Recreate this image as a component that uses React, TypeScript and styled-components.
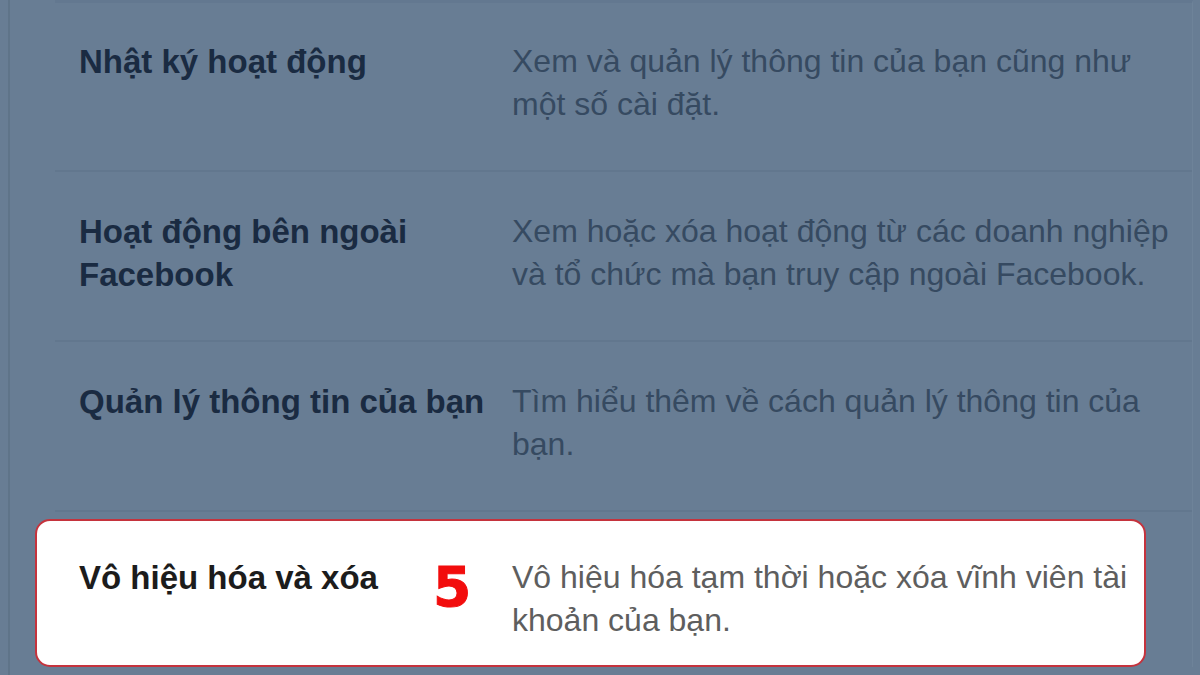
import React from 'react';
import styled, {createGlobalStyle} from 'styled-components';

const GlobalStyle = createGlobalStyle`
  html, body {
    margin: 0;
    padding: 0;
    background: #687d94;
    overflow: hidden;
  }
  * { box-sizing: border-box; }
`;

const Page = styled.div`
  width: 1200px;
  height: 675px;
  background: #687d94;
  padding-left: 8px;
  font-family: 'Liberation Sans', Arial, sans-serif;
`;

const Panel = styled.div`
  height: 100%;
  border-left: 2px solid #5f7489;
  padding-left: 45px;
`;

const List = styled.div`
  border-top: 3px solid #637890;
  border-right: 1px solid #6e8399;
  margin-right: 7px;
`;

const Row = styled.div<{highlight?: boolean}>`
  position: relative;
  display: grid;
  grid-template-columns: 433px 1fr;
  height: ${({highlight}) => (highlight ? '148px' : '170px')};
  padding: ${({highlight}) => (highlight ? '35px 0 0 42px' : '38px 0 0 24px')};
  border-bottom: 2px solid #62778e;
  background: ${({highlight}) => (highlight ? '#ffffff' : 'transparent')};

  &:first-child {
    height: 169px;
    padding-top: 37px;
  }

  ${({highlight}) =>
    highlight &&
    `
    margin: 7px 46px 0 -20px;
    border: 2px solid #c5333d;
    border-radius: 15px;
  `}
`;

const Title = styled.div<{highlight?: boolean}>`
  font-size: 33px;
  line-height: 43px;
  font-weight: 700;
  color: ${({highlight}) => (highlight ? '#1c1c1c' : '#1a2b42')};
`;

const Description = styled.div<{highlight?: boolean}>`
  font-size: 32px;
  line-height: 43px;
  font-weight: 400;
  color: ${({highlight}) => (highlight ? '#5e5e5e' : '#364a61')};
`;

const StepBadge = styled.span`
  position: absolute;
  left: 396px;
  top: 39px;
  font-family: 'DejaVu Sans', 'Liberation Sans', sans-serif;
  font-size: 55px;
  font-weight: 800;
  color: #f20d0d;
  line-height: 1;
  -webkit-text-stroke: 1px #f20d0d;
`;

const items = [
  {
    title: ['Nhật ký hoạt động'],
    desc: 'Xem và quản lý thông tin của bạn cũng như một số cài đặt.',
  },
  {
    title: ['Hoạt động bên ngoài', 'Facebook'],
    desc: 'Xem hoặc xóa hoạt động từ các doanh nghiệp và tổ chức mà bạn truy cập ngoài Facebook.',
  },
  {
    title: ['Quản lý thông tin của bạn'],
    desc: 'Tìm hiểu thêm về cách quản lý thông tin của bạn.',
  },
];

const App: React.FC = () => (
  <>
    <GlobalStyle />
    <Page>
      <Panel>
        <List>
          {items.map(({title, desc}) => (
            <Row key={desc}>
              <Title>
                {title.map((line, i) => (
                  <div key={i}>{line}</div>
                ))}
              </Title>
              <Description>{desc}</Description>
            </Row>
          ))}
          <Row highlight>
            <Title highlight>Vô hiệu hóa và xóa</Title>
            <Description highlight>
              Vô hiệu hóa tạm thời hoặc xóa vĩnh viên tài khoản của bạn.
            </Description>
            <StepBadge>5</StepBadge>
          </Row>
        </List>
      </Panel>
    </Page>
  </>
);

export default App;
